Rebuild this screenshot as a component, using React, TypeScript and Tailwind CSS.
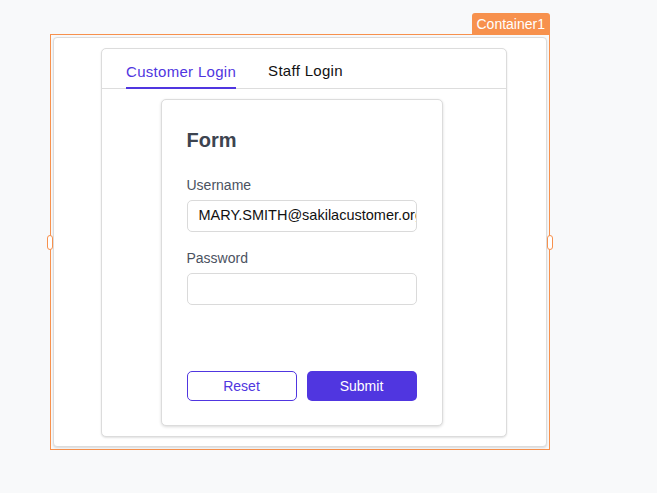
import React from 'react';

const App: React.FC = () => {
  return (
    <div className="min-h-[493px] w-full bg-[#f8f9fa] pl-[50px] pt-[34px] font-['Liberation_Sans',Arial,sans-serif]">
      {/* Selected container outline */}
      <div className="relative w-[500px] h-[416px] border border-[#f7914d] p-[2px]">
        <div className="absolute -top-[22px] -right-px h-[22px] px-[5px] rounded-t-[3px] bg-[#f7914d] text-white text-[14px] leading-[22px]">
          Container1
        </div>
        <div className="absolute -left-[4px] top-[200px] w-[6px] h-[15px] rounded-[3px] border border-[#f7914d] bg-white" />
        <div className="absolute -right-[4px] top-[200px] w-[6px] h-[15px] rounded-[3px] border border-[#f7914d] bg-white" />

        <div className="h-[410px] rounded-[4px] border border-[#dcdcdc] bg-white shadow-[0_1px_2px_rgba(0,0,0,0.12)] pl-[47px] pt-[10px]">
          {/* Tabs card */}
          <div className="w-[406px] h-[389px] rounded-[5px] border border-[#dcdcdc] bg-white shadow-[0_1px_2px_rgba(0,0,0,0.12)] flex flex-col">
            <div className="flex h-[40px] items-end gap-[32px] px-[24px] border-b border-[#dddddd]">
              <div className="flex flex-col items-center">
                <span className="text-[15px] tracking-[0.3px] text-[#5036e0] leading-[20px] pb-[5px]">Customer Login</span>
                <div className="h-[2px] w-full bg-[#5036e0] -mb-px" />
              </div>
              <div className="flex flex-col items-center">
                <span className="text-[15px] tracking-[0.3px] text-[#111] leading-[20px] pb-[7px]">Staff Login</span>
              </div>
            </div>

            <div className="flex-1 flex justify-center pt-[10px] pr-[5px]">
              {/* Form card */}
              <div className="w-[282px] h-[327px] rounded-[5px] border border-[#dcdcdc] bg-white shadow-[0_1px_3px_rgba(0,0,0,0.15)] pl-[25px] pr-[25px] pt-[28px] flex flex-col">
                <h2 className="text-[20px] font-bold text-[#3d4450] leading-[24px]">Form</h2>
                <label className="mt-[24px] text-[14px] text-[#4b5261] leading-[18px]">Username</label>
                <div className="mt-[6px] h-[32px] rounded-[5px] border border-[#dadada] px-[11px] flex items-center overflow-hidden whitespace-nowrap text-[14.5px] text-[#111]">
                  MARY.SMITH@sakilacustomer.org
                </div>
                <label className="mt-[17px] text-[14px] text-[#4b5261] leading-[18px]">Password</label>
                <div className="mt-[6px] h-[32px] rounded-[5px] border border-[#dadada]" />
                <div className="mt-[66px] flex gap-[10px]">
                  <button className="w-[110px] h-[30px] rounded-[5px] border border-[#5036e0] text-[#5036e0] text-[14px] bg-white">Reset</button>
                  <button className="w-[110px] h-[30px] rounded-[5px] bg-[#5036e0] text-white text-[14px]">Submit</button>
                </div>
              </div>
            </div>
          </div>
        </div>
      </div>
    </div>
  );
};

export default App;
